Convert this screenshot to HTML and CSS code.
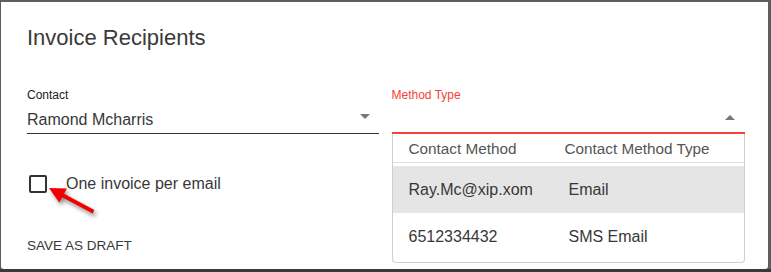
FILE: index.html
```html
<!DOCTYPE html>
<html lang="en">
<head>
    <meta charset="UTF-8">
    <title>Invoice Recipients</title>
    <link rel="stylesheet" href="styles.css">
</head>
<body>
    <div class="dialog">
        <h2 class="title">Invoice Recipients</h2>

        <div class="fields">
            <div class="col left">
                <div class="field">
                    <label class="label">Contact</label>
                    <div class="select">
                        <span>Ramond Mcharris</span>
                        <span class="caret down"></span>
                    </div>
                </div>

                <div class="check-row">
                    <span class="checkbox"></span>
                    <span>One invoice per email</span>
                </div>

                <div class="draft">Save as draft</div>
            </div>

            <div class="col right">
                <div class="field">
                    <label class="label focused">Method Type</label>
                    <div class="select open">
                        <span></span>
                        <span class="caret up"></span>
                    </div>
                </div>

                <div class="menu">
                    <div class="menu-head">
                        <span>Contact Method</span>
                        <span>Contact Method Type</span>
                    </div>
                    <div class="menu-row hover">
                        <span>Ray.Mc@xip.xom</span>
                        <span>Email</span>
                    </div>
                    <div class="menu-row">
                        <span>6512334432</span>
                        <span>SMS Email</span>
                    </div>
                </div>
            </div>
        </div>
    </div>

    <!-- annotation arrow -->
    <svg class="pointer" width="60" height="40" viewBox="40 180 60 40">
        <polygon points="49,188 66.9,188.4 64,193.7 94.4,210 92.6,213.6 62.2,197.3 59.3,202.6" fill="#f20000"/>
    </svg>
</body>
</html>
```

FILE: styles.css
```css
body {
    margin: 0;
    background: linear-gradient(#5e5e5e 0, #5e5e5e 269px, #3a3a3a 269px);
    font-family: 'Liberation Sans', Arial, sans-serif;
    color: #383838;
    height: 272px;
    overflow: hidden;
}

.dialog {
    margin: 2px 3px 0 1px;
    height: 267px;
    background: #fff;
    border-radius: 0 0 3px 3px;
    box-sizing: border-box;
}

.title {
    margin: 0;
    padding: 23px 26px 0;
    font-size: 22px;
    line-height: 26px;
    font-weight: normal;
    color: #3a3a3a;
}

.fields {
    display: flex;
    align-items: flex-start;
    gap: 13px;
    padding: 0 23px 0 26px;
    margin-top: 37px;
}

.col.left {
    width: 352px;
}

.col.right {
    width: 354px;
}

.label {
    display: block;
    font-size: 12px;
    line-height: 14px;
    color: #222;
}

.label.focused {
    color: #f44336;
}

.select {
    display: flex;
    justify-content: space-between;
    align-items: flex-start;
    margin-top: 4px;
    height: 28px;
    box-sizing: border-box;
    border-bottom: 1px solid #333;
    font-size: 16px;
    line-height: 25px;
    padding-top: 1px;
    padding-right: 9px;
}

.select.open {
    border-bottom: 2px solid #f44336;
    padding-right: 10px;
}

.caret {
    width: 0;
    height: 0;
    border-left: 5px solid transparent;
    border-right: 5px solid transparent;
    margin-top: 7px;
}

.caret.down {
    border-top: 5px solid #777;
}

.caret.up {
    border-bottom: 5px solid #777;
    margin-top: 8px;
}

.check-row {
    display: flex;
    align-items: center;
    gap: 19px;
    margin-top: 41px;
    height: 18px;
    font-size: 16px;
}

.checkbox {
    width: 18px;
    height: 18px;
    box-sizing: border-box;
    border: 2px solid #333;
    border-radius: 2px;
    margin-left: 2px;
}

.draft {
    margin-top: 45px;
    font-size: 13.5px;
    line-height: 16px;
    text-transform: uppercase;
}

.menu {
    border: 1px solid #cfcfcf;
    border-top: none;
    border-radius: 0 0 4px 4px;
    padding-bottom: 2px;
}

.menu-head {
    display: grid;
    grid-template-columns: 156px 1fr;
    height: 29px;
    box-sizing: border-box;
    padding: 5px 0 0 16px;
    border-bottom: 1px solid #e0e0e0;
    font-size: 15.3px;
    line-height: 20px;
    color: #555;
    margin-bottom: 3px;
}

.menu-row {
    display: grid;
    grid-template-columns: 160px 1fr;
    align-items: center;
    height: 47px;
    padding: 1px 0 0 16px;
    box-sizing: border-box;
    font-size: 16px;
    line-height: 24px;
}

.menu-row.hover {
    background: #e5e5e5;
}

.pointer {
    position: absolute;
    left: 40px;
    top: 180px;
    filter: drop-shadow(2px 3px 2px rgba(0, 0, 0, 0.45));
}
```
